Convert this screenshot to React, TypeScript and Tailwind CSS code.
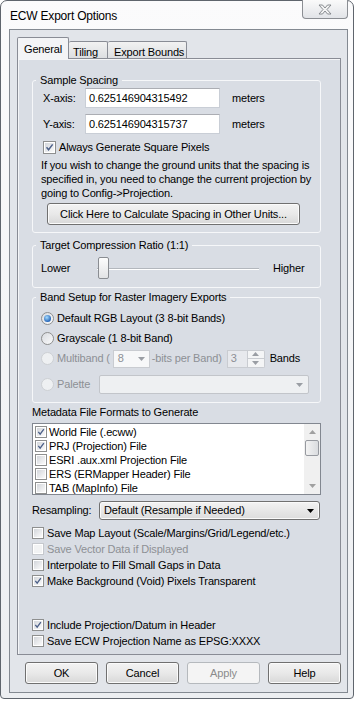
import React from "react";
import clsx from "clsx";

// ECW Export Options dialog, Win7 basic look.

function CheckBox({ checked = false, disabled = false, small = false }: { checked?: boolean; disabled?: boolean; small?: boolean }) {
  return (
    <span
      className={clsx(
        "relative flex shrink-0 border",
        small ? "h-[12px] w-[12px]" : "h-[13px] w-[13px]",
        disabled ? "border-[#c5c8cd] bg-[#f4f4f4]" : "border-[#8e8f8f] bg-white",
      )}
    >
      <span
        className={clsx(
          "h-full w-full border border-white",
          disabled ? "bg-[#f2f3f4]" : "bg-linear-to-br from-[#d3d6db] to-[#fbfbfb]",
        )}
      />
      {checked && (
        <svg viewBox="0 0 13 13" className="absolute inset-0 h-full w-full">
          <path d="M3 6.3 L5.4 9.2 L10.2 2.8" fill="none" stroke="#4b5f88" strokeWidth="1.7" />
        </svg>
      )}
    </span>
  );
}

function Radio({ checked = false, disabled = false }: { checked?: boolean; disabled?: boolean }) {
  return (
    <span
      className={clsx(
        "flex h-[13px] w-[13px] shrink-0 items-center justify-center rounded-full border",
        disabled
          ? "border-[#cdd0d4] bg-[#eef0f2]"
          : "border-[#8e8f8f] bg-linear-to-br from-[#d8dbe0] to-[#fbfbfb]",
      )}
    >
      {checked && (
        <span className="h-[7px] w-[7px] rounded-full bg-[radial-gradient(circle_at_40%_35%,#a6dcff,#1d5eb4_75%)]" />
      )}
    </span>
  );
}

function Arrow({ color = "#000", className }: { color?: string; className?: string }) {
  return (
    <svg viewBox="0 0 7 4" className={clsx("h-[4px] w-[7px]", className)}>
      <path d="M0 0 H7 L3.5 4 Z" fill={color} />
    </svg>
  );
}

function Group({ title, className, children }: { title: string; className?: string; children: React.ReactNode }) {
  return (
    <fieldset className={clsx("w-[289px] rounded-[3px] border border-[#f6f7f9]", className)}>
      <legend className="ml-[3px] px-[4px] leading-[14px]">{title}</legend>
      {children}
    </fieldset>
  );
}

function Btn({ children, disabled = false, className }: { children: React.ReactNode; disabled?: boolean; className?: string }) {
  return (
    <button
      type="button"
      className={clsx(
        "flex h-[22px] items-center justify-center rounded-[3px] border",
        disabled
          ? "border-[#b5b9bd] bg-[#f4f4f4] text-[#8b8b8b]"
          : "border-[#707070] bg-linear-to-b from-[#f3f3f3] via-[#e9e9e9] to-[#d8d8d8] shadow-[inset_0_0_0_1px_#fbfbfb]",
        className,
      )}
    >
      {children}
    </button>
  );
}

const metadata = [
  { label: "World File (.ecww)", checked: true },
  { label: "PRJ (Projection) File", checked: true },
  { label: "ESRI .aux.xml Projection File", checked: false },
  { label: "ERS (ERMapper Header) File", checked: false },
  { label: "TAB (MapInfo) File", checked: false },
];

export default function App() {
  return (
    <div className="h-[702px] w-[359px] bg-white font-['Liberation_Sans',Arial,sans-serif] text-[11px] tracking-[-0.15px] text-black">
      <div className="flex h-[699px] w-[354px] flex-col rounded-t-[7px] rounded-b-[4px] border border-[#5f656d] bg-linear-to-b from-[#fbfbfc] to-[#eceef1] pb-[5px] pl-[8px] pr-[5px]">
        {/* barra del titolo */}
        <div className="flex h-[28px] shrink-0 items-start justify-between">
          <span className="ml-[1px] mt-[8px] text-[12px] leading-[14px] tracking-[-0.2px]">ECW Export Options</span>
          <div className="-mt-px flex h-[19px] w-[46px] items-center justify-center rounded-b-[4px] border border-t-0 border-[#8b8e93] bg-linear-to-b from-[#fafafa] to-[#e2e4e8]">
            <svg viewBox="0 0 14 11" className="h-[11px] w-[14px]">
              <path
                d="M1 1 H4.5 L7 4 L9.5 1 H13 L9 5.5 L13 10 H9.5 L7 7 L4.5 10 H1 L5 5.5 Z"
                fill="#f4f4f4"
                stroke="#7d8186"
                strokeWidth="0.9"
                strokeLinejoin="round"
              />
            </svg>
          </div>
        </div>

        {/* area client */}
        <div className="flex flex-1 flex-col border border-[#838991] bg-[#e2e5ea]">
          {/* schede */}
          <div className="flex h-[28px] shrink-0 items-end pl-[7px]">
            <div className="relative z-10 -mb-px flex h-[22px] w-[52px] items-start rounded-t-[2px] border border-b-0 border-[#898c95] bg-[#f3f4f6] pl-[6px] pt-[3px]">
              General
            </div>
            <div className="flex h-[17px] w-[39px] items-start rounded-t-[2px] border border-b-0 border-l-0 border-[#898c95] bg-linear-to-b from-[#f2f2f2] to-[#dcdee1] pl-[4px] pt-[2px]">
              Tiling
            </div>
            <div className="flex h-[17px] w-[79px] items-start rounded-t-[2px] border border-b-0 border-l-0 border-[#898c95] bg-linear-to-b from-[#f2f2f2] to-[#dcdee1] pl-[6px] pt-[2px]">
              Export Bounds
            </div>
          </div>

          {/* pagina General */}
          <div className="ml-[7px] mr-[6px] flex flex-1 flex-col border border-[#898c95] bg-[#d9dde4] pl-[14px] shadow-[inset_1px_1px_0_#f4f5f7]">
            <Group title="Sample Spacing" className="mt-[14px] pb-[7px]">
              <div className="mt-px flex h-[20px] items-center pl-[10px]">
                <span className="w-[42px]">X-axis:</span>
                <span className="flex h-[20px] w-[135px] items-center border border-[#c9ced6] border-t-[#abadb3] bg-white pl-[3px]">
                  0.625146904315492
                </span>
                <span className="ml-[12px]">meters</span>
              </div>
              <div className="mt-[6px] flex h-[20px] items-center pl-[10px]">
                <span className="w-[42px]">Y-axis:</span>
                <span className="flex h-[20px] w-[135px] items-center border border-[#c9ced6] border-t-[#abadb3] bg-white pl-[3px]">
                  0.625146904315737
                </span>
                <span className="ml-[12px]">meters</span>
              </div>
              <div className="mt-[7px] flex h-[13px] items-center pl-[10px]">
                <CheckBox checked />
                <span className="ml-[3px]">Always Generate Square Pixels</span>
              </div>
              <p className="mt-[4px] ml-[8px] w-[275px] leading-[14px]">
                If you wish to change the ground units that the spacing is specified in, you need to change the current
                projection by going to Config-&gt;Projection.
              </p>
              <Btn className="mt-[3px] ml-[14px] w-[253px]">Click Here to Calculate Spacing in Other Units...</Btn>
            </Group>

            <Group title="Target Compression Ratio (1:1)" className="mt-[5px] pb-[8px]">
              <div className="mt-[5px] flex h-[22px] items-center pl-[8px]">
                <span className="w-[56px]">Lower</span>
                <div className="relative h-[22px] w-[162px]">
                  <div className="absolute left-0 right-0 top-[11px] h-[2px] border-b border-white bg-[#b3b7bd]" />
                  <div className="absolute left-px top-0 h-[22px] w-[11px] rounded-[2px] border border-[#8a8d92] bg-linear-to-b from-[#fdfdfd] to-[#e2e3e5]" />
                </div>
                <span className="ml-[14px]">Higher</span>
              </div>
            </Group>

            <Group title="Band Setup for Raster Imagery Exports" className="mt-[2px] pb-[7px]">
              <div className="mt-[4px] flex h-[20px] items-center pl-[8px]">
                <Radio checked />
                <span className="ml-[3px]">Default RGB Layout (3 8-bit Bands)</span>
              </div>
              <div className="flex h-[20px] items-center pl-[8px]">
                <Radio />
                <span className="ml-[3px]">Grayscale (1 8-bit Band)</span>
              </div>
              <div className="flex h-[21px] items-center pl-[8px] text-[#8d9095]">
                <Radio disabled />
                <span className="ml-[3px]">Multiband (</span>
                <span className="ml-[3px] flex h-[18px] w-[37px] items-center justify-between border border-[#c9ccd1] bg-[#f7f8f9] pl-[4px] pr-[4px]">
                  8
                  <Arrow color="#9a9ea4" />
                </span>
                <span className="ml-[2px]">-bits per Band)</span>
                <span className="ml-[5px] flex h-[18px] w-[21px] items-center border border-[#c9ccd1] bg-[#e7e9ed] pl-[3px]">3</span>
                <span className="flex h-[18px] w-[17px] flex-col">
                  <span className="flex flex-1 items-center justify-center rounded-tr-[2px] border border-l-0 border-[#c9ccd1] bg-[#f4f5f6]">
                    <Arrow color="#9a9ea4" className="rotate-180" />
                  </span>
                  <span className="flex flex-1 items-center justify-center rounded-br-[2px] border border-l-0 border-t-0 border-[#c9ccd1] bg-[#f4f5f6]">
                    <Arrow color="#9a9ea4" />
                  </span>
                </span>
                <span className="ml-[5px] text-black">Bands</span>
              </div>
              <div className="mt-[5px] flex h-[21px] items-center pl-[8px] text-[#8d9095]">
                <Radio disabled />
                <span className="ml-[3px] w-[42px]">Palette</span>
                <span className="flex h-[19px] w-[210px] items-center justify-end rounded-[2px] border border-[#c2c5ca] bg-[#eef0f2] pr-[5px]">
                  <Arrow color="#9a9ea4" />
                </span>
              </div>
            </Group>

            <div className="mt-[2px] leading-[14px]">Metadata File Formats to Generate</div>
            <div className="mt-[4px] flex h-[72px] w-[289px] border border-[#828790] bg-white">
              <div className="flex-1 pt-px">
                {metadata.map((m) => (
                  <div key={m.label} className="flex h-[14px] items-center pl-[2px]">
                    <CheckBox small checked={m.checked} />
                    <span className="ml-[2px]">{m.label}</span>
                  </div>
                ))}
              </div>
              <div className="flex w-[16px] flex-col bg-[#f0f0f0]">
                <div className="flex h-[16px] items-center justify-center">
                  <Arrow color="#a0a0a0" className="rotate-180" />
                </div>
                <div className="mx-px h-[16px] rounded-[2px] border border-[#979aa0] bg-linear-to-r from-[#f3f3f3] to-[#dadcdf]" />
                <div className="flex-1" />
                <div className="flex h-[16px] items-center justify-center">
                  <Arrow color="#a0a0a0" />
                </div>
              </div>
            </div>

            <div className="mt-[6px] flex h-[19px] items-center">
              <span className="w-[67px]">Resampling:</span>
              <span className="flex h-[19px] w-[221px] items-center justify-between rounded-[3px] border border-[#707070] bg-linear-to-b from-[#f3f3f3] to-[#dcdcdc] pl-[4px] pr-[5px] shadow-[inset_0_0_0_1px_#fafafa]">
                Default (Resample if Needed)
                <Arrow />
              </span>
            </div>

            <div className="mt-[5px] flex flex-col">
              <div className="flex h-[16px] items-center">
                <CheckBox small />
                <span className="ml-[3px]">Save Map Layout (Scale/Margins/Grid/Legend/etc.)</span>
              </div>
              <div className="flex h-[16px] items-center text-[#8d9095]">
                <CheckBox small disabled />
                <span className="ml-[3px]">Save Vector Data if Displayed</span>
              </div>
              <div className="flex h-[16px] items-center">
                <CheckBox small />
                <span className="ml-[3px]">Interpolate to Fill Small Gaps in Data</span>
              </div>
              <div className="flex h-[16px] items-center">
                <CheckBox small checked />
                <span className="ml-[3px]">Make Background (Void) Pixels Transparent</span>
              </div>
              <div className="mt-[28px] flex h-[16px] items-center">
                <CheckBox small checked />
                <span className="ml-[3px]">Include Projection/Datum in Header</span>
              </div>
              <div className="flex h-[16px] items-center">
                <CheckBox small />
                <span className="ml-[3px]">Save ECW Projection Name as EPSG:XXXX</span>
              </div>
            </div>
          </div>

          {/* pulsanti */}
          <div className="flex shrink-0 gap-[8px] pb-[8px] pl-[15px] pt-[7px]">
            <Btn className="w-[73px]">OK</Btn>
            <Btn className="w-[73px]">Cancel</Btn>
            <Btn className="w-[73px]" disabled>
              Apply
            </Btn>
            <Btn className="w-[73px]">Help</Btn>
          </div>
        </div>
      </div>
    </div>
  );
}
